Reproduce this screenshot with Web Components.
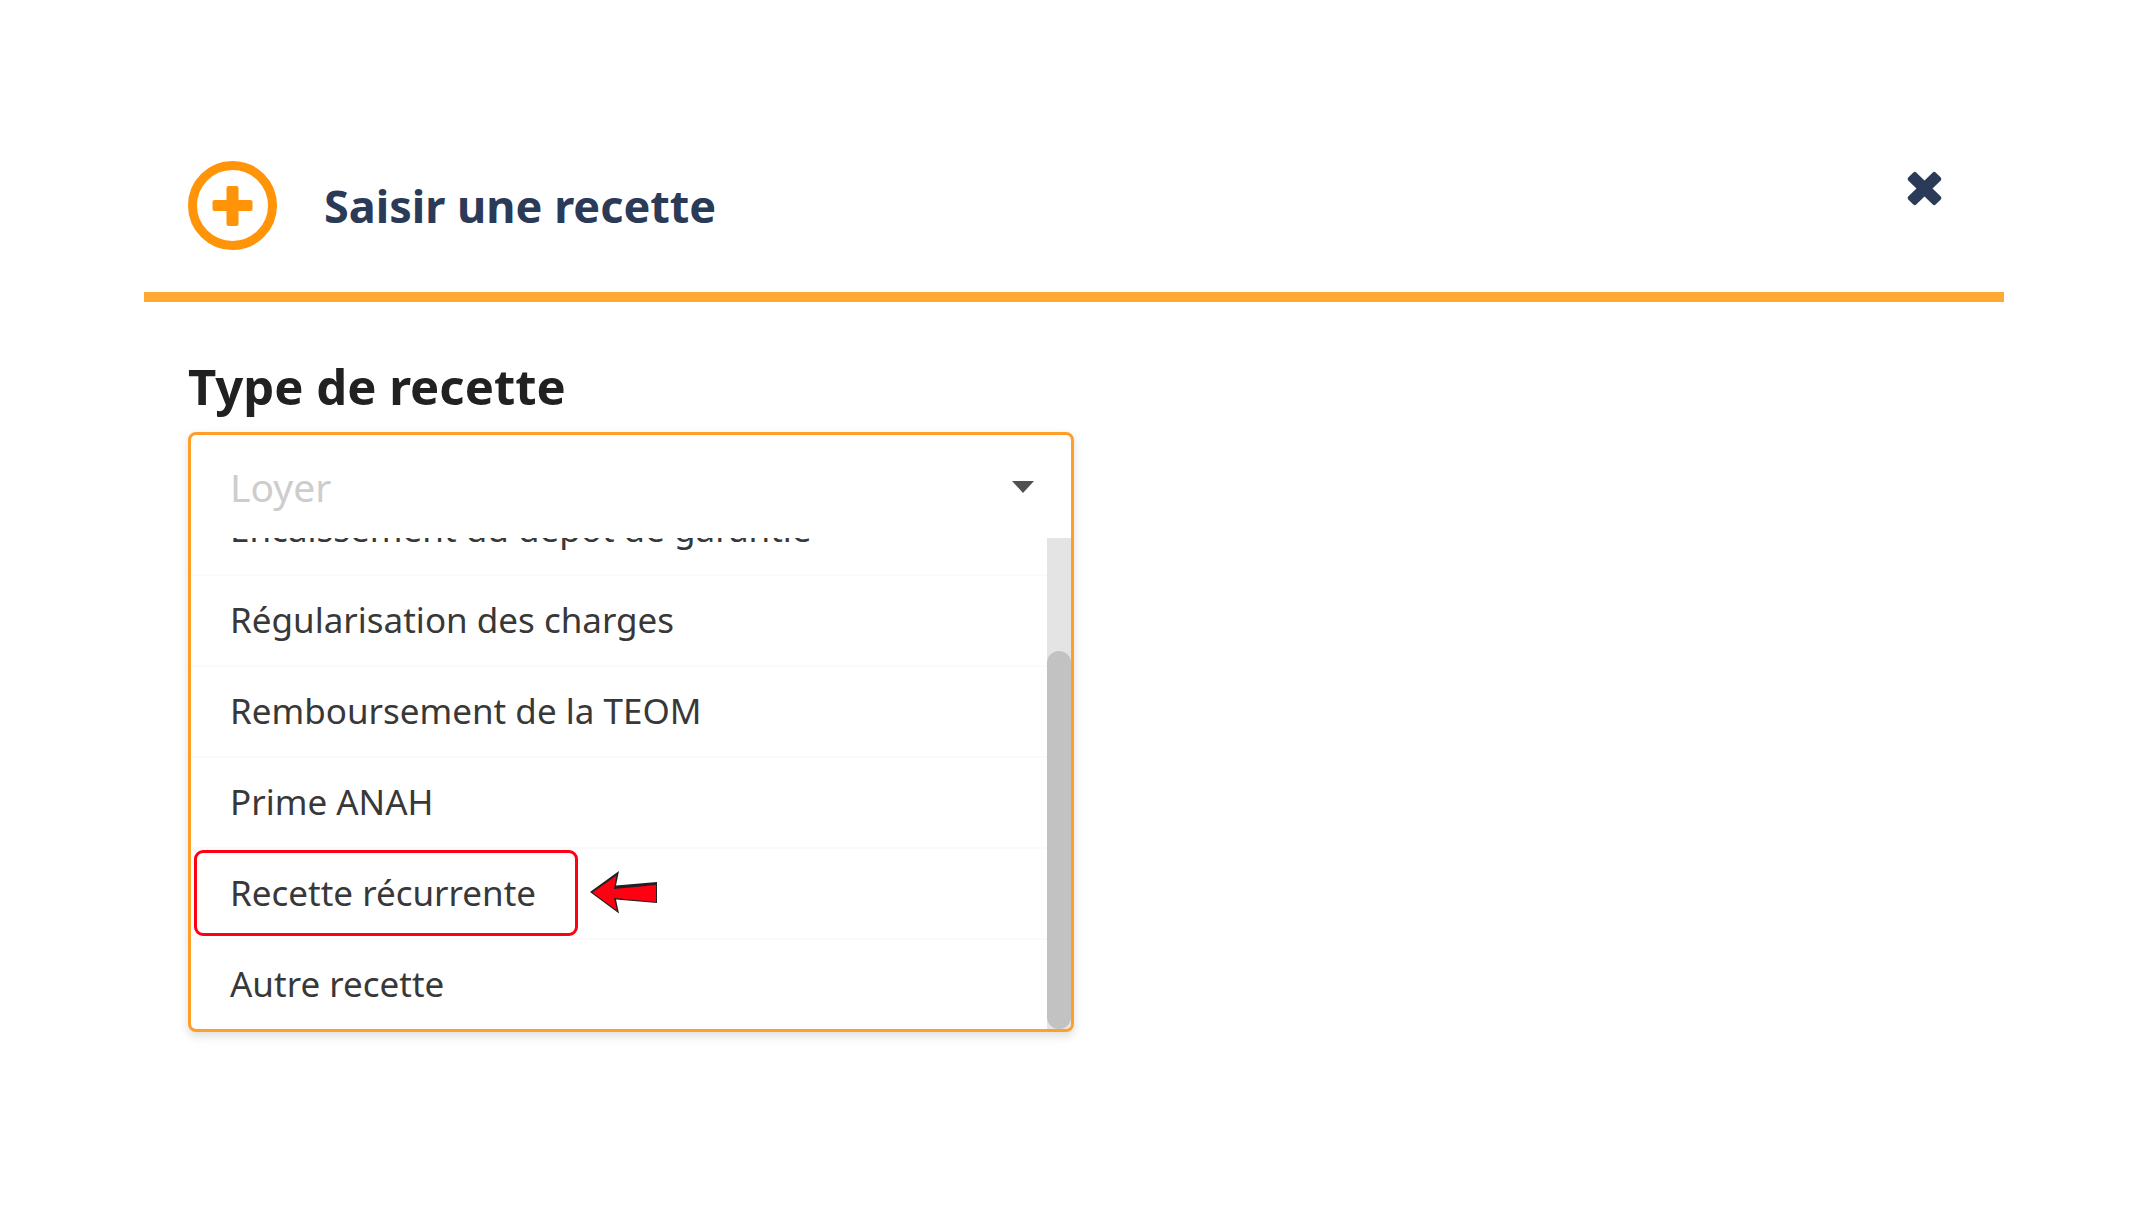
<!DOCTYPE html>
<html lang="fr">
<head>
<meta charset="utf-8">
<title>Saisir une recette</title>
<style>
  body { margin: 0; background: #fff; font-family: "Noto Sans", "Open Sans", sans-serif; color: #212121; }
</style>
</head>
<body>
<recette-dialog>
  <span slot="title">Saisir une recette</span>
  <recette-select label="Type de recette" value="Loyer">
    <recette-option>Encaissement du dépôt de garantie</recette-option>
    <recette-option>Régularisation des charges</recette-option>
    <recette-option>Remboursement de la TEOM</recette-option>
    <recette-option>Prime ANAH</recette-option>
    <recette-option marked>Recette récurrente</recette-option>
    <recette-option>Autre recette</recette-option>
  </recette-select>
</recette-dialog>

<template id="dialog">
  <style>
    :host { display: block; padding: 120px 132px 120px 144px; }
    header { display: flex; align-items: center; gap: 47px; padding: 41px 44px 42px; border-bottom: 10px solid #ffa834; }
    svg { display: block; }
    h1 { margin: 0; flex: 1; font-size: 45px; line-height: 56px; font-weight: 700; color: #2b3a57; }
    button { align-self: flex-start; margin: 0; padding: 10px 18px; border: 0; background: none; }
    section { padding: 56px 44px 0; }
  </style>
  <header>
    <svg width="89" height="89" viewBox="0 0 89 89" aria-hidden="true">
      <circle cx="44.500" cy="44.500" r="40" fill="none" stroke="#ff9408" stroke-width="9"/>
      <path fill="#ff9408" d="M40.500 25h8q2 0 2 2v12h12q2 0 2 2v7q0 2-2 2h-12v13q0 2-2 2h-8q-2 0-2-2v-13h-12q-2 0-2-2v-7q0-2 2-2h12v-12q0-2 2-2z"/>
    </svg>
    <h1><slot name="title"></slot></h1>
    <button type="button" aria-label="Fermer">
      <svg width="35" height="35" viewBox="0 0 35 35" aria-hidden="true">
        <path fill="#2b3a57" d="M1.200 6.600L6.400 1.400Q7.800 0 9.200 1.400L17.500 9.500 25.800 1.400Q27.200 0 28.600 1.400L33.800 6.600Q35 8 33.800 9.400L25.500 17.500 33.800 25.600Q35 27 33.800 28.400L28.600 33.600Q27.200 35 25.800 33.600L17.500 25.500 9.200 33.600Q7.800 35 6.400 33.600L1.200 28.400Q0 27 1.200 25.600L9.500 17.500 1.200 9.400Q0 8 1.200 6.600z"/>
      </svg>
    </button>
  </header>
  <section><slot></slot></section>
</template>

<template id="select">
  <style>
    :host { display: block; width: 50%; }
    label { display: block; margin-bottom: 18px; font-size: 49px; line-height: 56px; font-weight: 700; }
    .box { border: 3px solid #ff9f2a; border-radius: 8px; overflow: hidden; box-shadow: 0 4px 10px rgba(34, 36, 38, .16); background: #fff; }
    .control { display: flex; align-items: center; padding: 0 37px 0 39px; }
    select { appearance: none; flex: 1; min-width: 0; height: 103px; margin: 0; padding: 0; border: 0; outline: 0; background: none; font: 400 39px/56px "Noto Sans", "Open Sans", sans-serif; color: #cdcdcd; }
    svg { display: block; }
    .menu { display: flex; height: 491px; }
    .list { flex: 1; overflow-y: auto; scrollbar-width: none; }
    .track { display: flex; flex-direction: column; justify-content: flex-end; width: 24px; background: #e4e4e4; }
    .thumb { height: 77%; border-radius: 12px; background: #c2c2c2; }
  </style>
  <label for="type"></label>
  <div class="box">
    <div class="control">
      <select id="type"><option></option></select>
      <svg width="22" height="12" viewBox="0 0 22 12" aria-hidden="true"><path fill="#505050" d="M0 0h22L11 12z"/></svg>
    </div>
    <div class="menu">
      <div class="list" role="listbox"><slot></slot></div>
      <div class="track"><div class="thumb"></div></div>
    </div>
  </div>
</template>

<template id="option">
  <style>
    :host { display: flex; align-items: center; gap: 12px; box-sizing: border-box; height: 91px; padding: 0 0 1px 3px; border-top: 2px solid #fafafa; font-size: 35px; line-height: 48px; color: #383838; }
    .text { padding: 16px 39px 16px 33px; border: 3px solid transparent; border-radius: 9px; white-space: nowrap; }
    :host([marked]) .text { border-color: #ff0013; }
    svg { display: none; }
    :host([marked]) svg { display: block; }
  </style>
  <span class="text"><slot></slot></span>
  <svg width="67" height="44" viewBox="0 0 67 44" aria-hidden="true">
    <path fill="#231f20" d="M0 21L29 0 26 14.500 67 11V32L26 28.500 29 42.500z"/>
    <path fill="#ff0013" d="M2.500 21.500L26.500 4.500 24 18 66 14V31L24 27 27 39.500z"/>
  </svg>
</template>

<script>
  class TemplateElement extends HTMLElement {
    constructor() {
      super();
      const template = document.getElementById(this.constructor.template);
      this.attachShadow({ mode: "open" }).append(template.content.cloneNode(true));
    }
  }

  class RecetteOption extends TemplateElement {
    static template = "option";
    connectedCallback() { this.setAttribute("role", "option"); }
  }

  class RecetteSelect extends TemplateElement {
    static template = "select";
    connectedCallback() {
      const root = this.shadowRoot;
      root.querySelector("label").textContent = this.getAttribute("label");
      root.querySelector("option").textContent = this.getAttribute("value");
      // The menu opens scrolled to its last entries.
      const list = root.querySelector(".list");
      list.scrollTop = list.scrollHeight;
    }
  }

  class RecetteDialog extends TemplateElement {
    static template = "dialog";
  }

  customElements.define("recette-option", RecetteOption);
  customElements.define("recette-dialog", RecetteDialog);
  customElements.define("recette-select", RecetteSelect);
</script>
</body>
</html>
